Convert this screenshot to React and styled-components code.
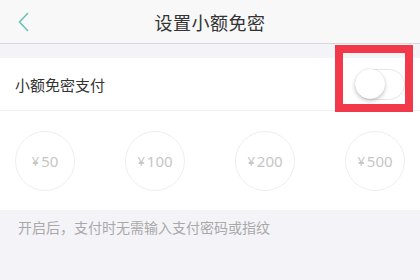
import React from 'react';
import styled, { createGlobalStyle } from "styled-components";

const GlobalStyle = createGlobalStyle`
  html, body {
    margin: 0;
    padding: 0;
    background: #f4f3f7;
    font-family: "Noto Sans CJK SC", "Noto Sans", sans-serif;
  }
`

const amounts = ['50', '100', '200', '500'];

function App() {
    return (
        <Page>
            <GlobalStyle/>
            <Header>
                <Back>
                    <svg width="12" height="20" viewBox="0 0 12 20">
                        <polyline points="10,1 1.5,10 10,19" fill="none" stroke="#6cc3b5" strokeWidth="1.6"/>
                    </svg>
                </Back>
                <Title>设置小额免密</Title>
            </Header>

            <Gap/>

            <Row>
                <Label>小额免密支付</Label>
                <Toggle><Knob/></Toggle>
                <Highlight/>
            </Row>

            <Amounts>
                {amounts.map(a => (
                    <Circle key={a}><Yen>¥</Yen>{a}</Circle>
                ))}
            </Amounts>

            <Note>开启后，支付时无需输入支付密码或指纹</Note>
        </Page>
    );
}

export default App;

const Page = styled.div`
  width: 420px;
  height: 280px;
  background: #f4f3f7;
  overflow: hidden;
`
const Header = styled.div`
  height: 43px;
  background: #f8f8f9;
  border-bottom: 1px solid #d8d8da;
  display: flex;
  align-items: center;
  justify-content: center;
  position: relative;
`
const Back = styled.div`
  position: absolute;
  left: 18px;
  top: 12px;
  display: flex;
`
const Title = styled.span`
  font-size: 18px;
  color: #333;
  letter-spacing: 0.5px;
`
const Gap = styled.div`
  height: 14px;
`
const Row = styled.div`
  height: 52px;
  background: #fff;
  border-bottom: 1px solid #eeeeee;
  display: flex;
  align-items: center;
  justify-content: space-between;
  padding: 0 15px 0 15px;
  position: relative;
`
const Label = styled.span`
  font-size: 15px;
  color: #333;
`
const Toggle = styled.div`
  width: 50px;
  height: 31px;
  box-sizing: border-box;
  border: 1px solid #e6e6e6;
  border-radius: 16px;
  background: #fff;
  position: relative;
`
const Knob = styled.div`
  position: absolute;
  left: -1px;
  top: -1px;
  width: 30px;
  height: 30px;
  border-radius: 50%;
  background: #fff;
  box-shadow: 0 2px 4px rgba(0,0,0,0.22), 0 0 1px rgba(0,0,0,0.15);
`
const Highlight = styled.div`
  position: absolute;
  left: 335px;
  top: -13px;
  width: 78px;
  height: 67px;
  box-sizing: border-box;
  border: 8px solid #f2394a;
`
const Amounts = styled.div`
  background: #fff;
  height: 99px;
  display: flex;
  align-items: center;
  justify-content: space-between;
  padding: 0 15px;
`
const Circle = styled.div`
  width: 60px;
  height: 60px;
  box-sizing: border-box;
  border: 1px solid #eeeeee;
  border-radius: 50%;
  display: flex;
  align-items: center;
  justify-content: center;
  font-family: "Noto Sans", "Noto Sans CJK SC", sans-serif;
  font-size: 15px;
  color: #c6c6c6;
`
const Yen = styled.span`
  font-size: 13px;
  margin-right: 2px;
`
const Note = styled.div`
  padding: 8px 18px;
  font-size: 14px;
  line-height: 18px;
  color: #a9a9a9;
`
